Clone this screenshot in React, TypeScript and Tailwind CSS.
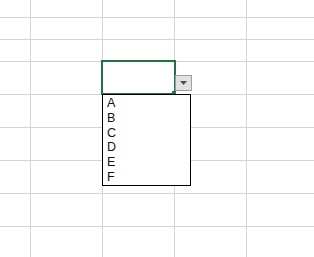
import React from "react";

const colWidths = ["w-[31px]", "w-[72px]", "w-[72px]", "w-[72px]", ""];
const rowCount = 9;
const items = ["A", "B", "C", "D", "E", "F"];

const App = () => {
  const cells = [];
  for (let r = 0; r < rowCount; r++) {
    for (let c = 0; c < colWidths.length; c++) {
      const lastCol = c === colWidths.length - 1;
      const lastRow = r === rowCount - 1;
      cells.push(
        <div
          key={`${r}-${c}`}
          className={`border-[#d4d4d4] ${lastCol ? "" : "border-r"} ${lastRow ? "" : "border-b"}`}
        />
      );
    }
  }

  return (
    <div className="relative w-[314px] h-[257px] overflow-hidden bg-white">
      {/* sheet grid */}
      <div className="grid h-full w-full grid-cols-[31px_72px_72px_72px_1fr] grid-rows-[18px_22px_22px_33px_33px_33px_33px_33px_1fr]">
        {cells}
      </div>

      {/* active cell */}
      <div className="absolute left-[101px] top-[60px] w-[75px] h-[35px] border-2 border-[#217346]" />
      <div className="absolute left-[172px] top-[91px] w-[4px] h-[4px] bg-[#217346]" />

      {/* dropdown button */}
      <div className="absolute left-[175px] top-[75px] w-[17px] h-[16px] border border-[#a0a0a0] bg-[#e1e1e1] flex items-center justify-center">
        <svg width="7" height="4" viewBox="0 0 7 4">
          <path d="M0 0h7L3.5 4z" fill="#505050" />
        </svg>
      </div>

      {/* validation list */}
      <div
        className="absolute left-[102px] top-[94px] w-[89px] h-[92px] border border-black bg-white pl-[4px] pt-[1px] text-[12.5px] leading-[14.8px] text-[#111]"
        style={{ fontFamily: '"Liberation Sans", Arial, sans-serif' }}
      >
        {items.map((item) => (
          <div key={item}>{item}</div>
        ))}
      </div>
    </div>
  );
};

export default App;
